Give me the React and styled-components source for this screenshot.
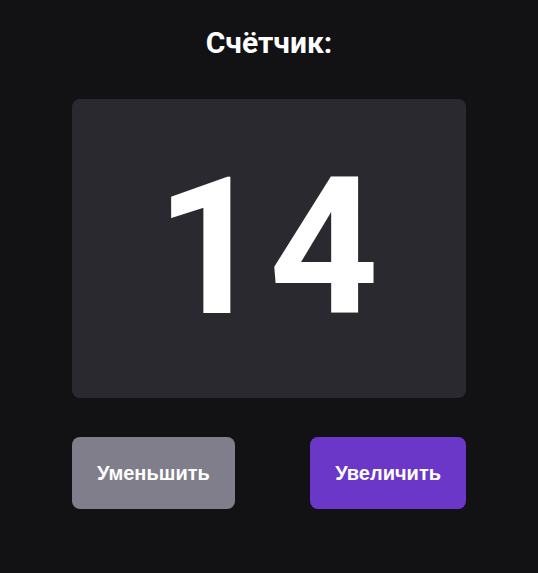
import React, { useState } from "react";
import styled, { createGlobalStyle } from "styled-components";

const Global = createGlobalStyle`
  html, body { margin: 0; padding: 0; background: #121214; }
  body { font-family: Roboto, "Liberation Sans", sans-serif; }
`;

const Page = styled.div`
  min-height: 573px;
  display: flex;
  flex-direction: column;
  align-items: center;
  padding-top: 25px;
  box-sizing: border-box;
`;

const Title = styled.h1`
  margin: 0;
  font-family: Roboto, sans-serif;
  font-weight: 700;
  font-size: 30px;
  line-height: 36px;
  color: #ffffff;
`;

const Card = styled.div`
  margin-top: 38px;
  width: 394px;
  height: 299px;
  border-radius: 8px;
  background: #2a292f;
  display: flex;
  align-items: center;
  justify-content: center;
`;

const Number = styled.span`
  font-family: Roboto, sans-serif;
  font-weight: 700;
  font-size: 191px;
  line-height: 1;
  color: #ffffff;
  letter-spacing: 4px;
`;

const Controls = styled.div`
  margin-top: 39px;
  width: 394px;
  display: flex;
  justify-content: space-between;
`;

const Button = styled.button`
  height: 72px;
  padding: 0 25px;
  border: none;
  border-radius: 8px;
  background: ${(p) => (p.$primary ? "#6b37c9" : "#7f7e8a")};
  color: #ffffff;
  font-family: "Liberation Sans", Arial, sans-serif;
  font-weight: 700;
  font-size: 20px;
  cursor: pointer;
`;

export default function App() {
  const [count, setCount] = useState(14);
  return (
    <>
      <Global />
      <Page>
        <Title>Счётчик:</Title>
        <Card>
          <Number>{count}</Number>
        </Card>
        <Controls>
          <Button onClick={() => setCount((c) => c - 1)}>Уменьшить</Button>
          <Button $primary onClick={() => setCount((c) => c + 1)}>Увеличить</Button>
        </Controls>
      </Page>
    </>
  );
}
